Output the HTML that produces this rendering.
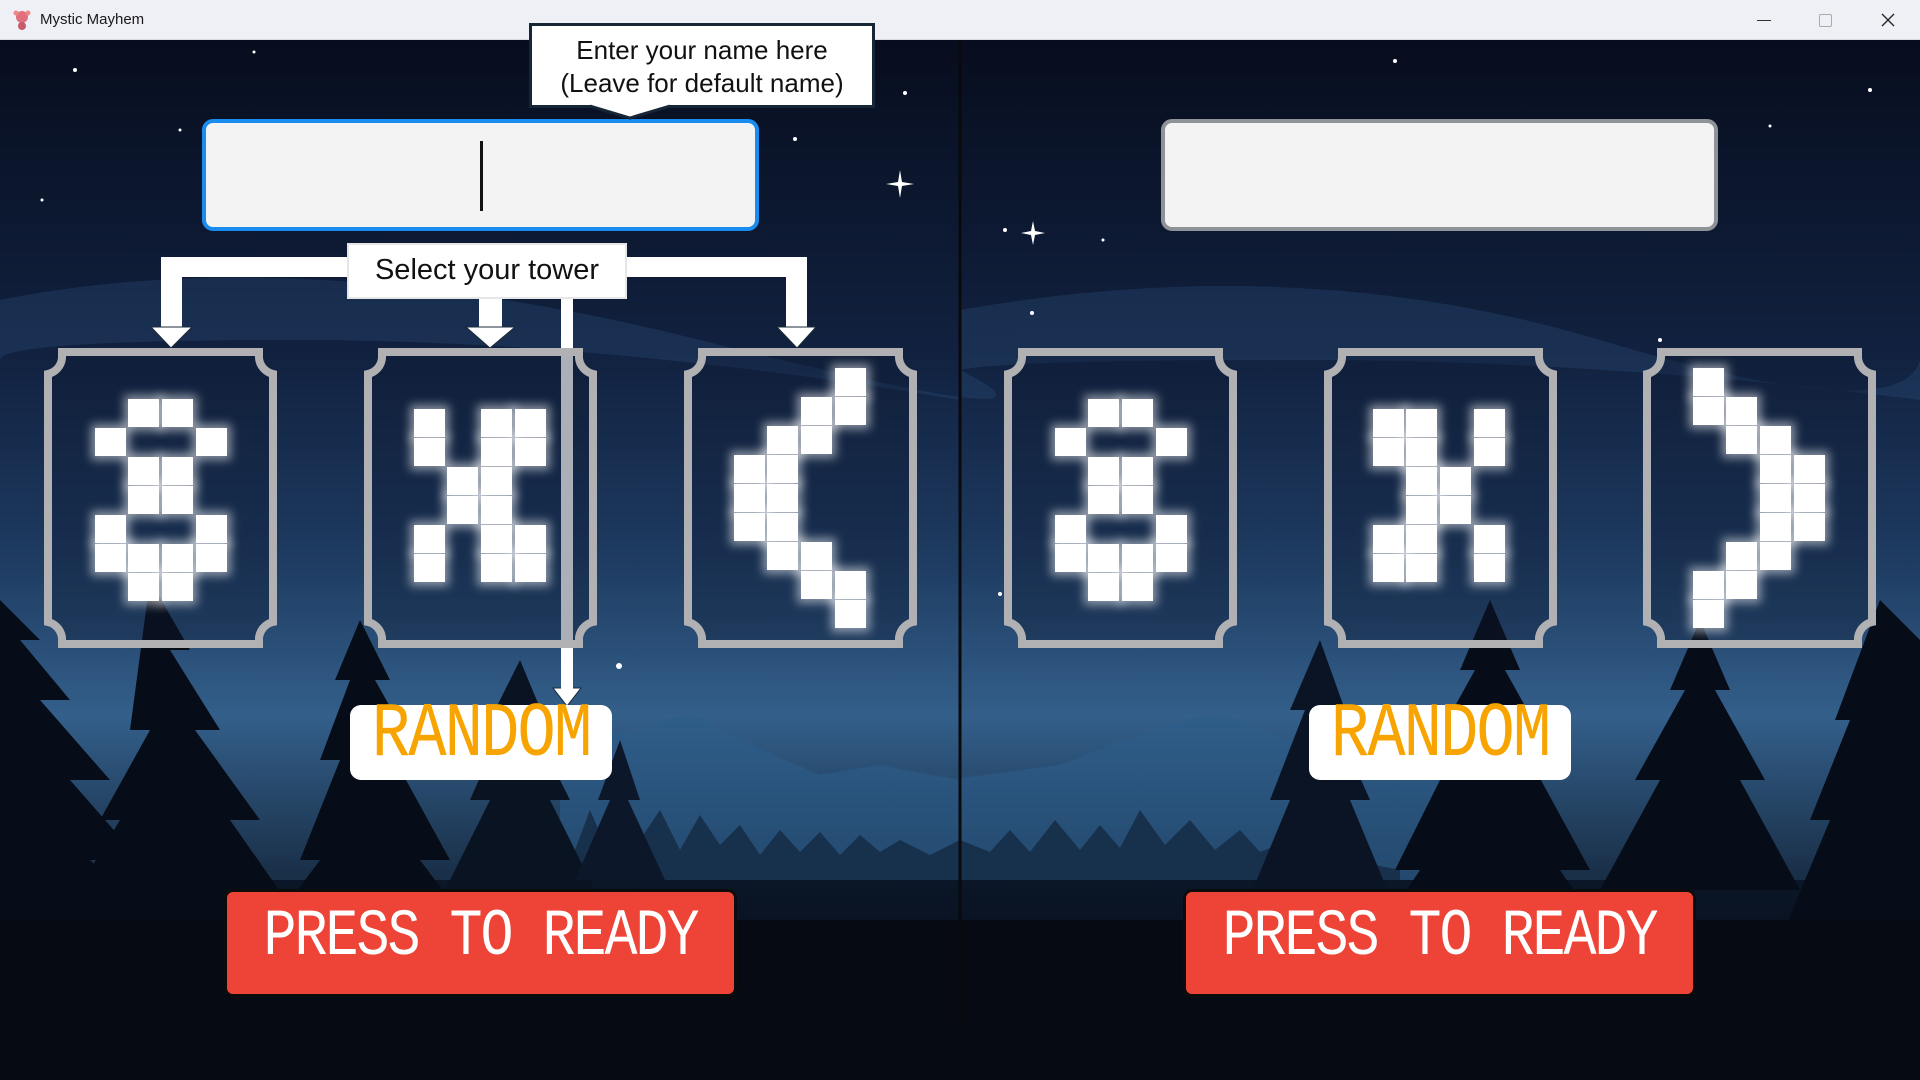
<!DOCTYPE html>
<html><head><meta charset="utf-8"><style>
*{margin:0;padding:0;box-sizing:border-box}
body{width:1920px;height:1080px;overflow:hidden;background:#05080f;position:relative;font-family:"Liberation Sans",sans-serif}
.abs{position:absolute}
#title{left:0;top:0;width:1920px;height:40px;background:#eff0f5;border-bottom:1px solid #d8d8de}
#title .t{left:40px;top:11px;font-size:15px;color:#1a1a1a}
.tip{background:#fff;border:3px solid #172636;color:#111;text-align:center}
.inp{background:#f3f3f4;border-radius:11px}
.cell{position:absolute;width:31px;height:28px;background:#fff;box-shadow:0 0 9px 4px rgba(255,255,255,.5)}
.rand{background:#fff;border-radius:11px;color:#f7a400;font-family:"Liberation Mono",monospace;font-size:64px;text-align:center;line-height:62px;letter-spacing:-2px}
.rand span,.ready span{display:inline-block;transform:scaleY(1.2)}
.ready{background:#ee4337;border:3px solid #0c0c0c;border-radius:9px;color:#fff;font-family:"Liberation Mono",monospace;font-size:55px;text-align:center;line-height:90px;letter-spacing:-2px}
.bar{background:#fff}
</style></head><body>
<svg class="abs" style="left:0;top:40px" width="1920" height="1040" viewBox="0 0 1920 1040">
<defs>
<linearGradient id="sky" x1="0" y1="0" x2="0" y2="1">
<stop offset="0" stop-color="#070d1e"/><stop offset=".3" stop-color="#11213f"/><stop offset=".5" stop-color="#1e3b61"/><stop offset=".65" stop-color="#335f8a"/><stop offset=".8" stop-color="#1a3049"/><stop offset="1" stop-color="#060a12"/>
</linearGradient>
<linearGradient id="mt" x1="0" y1="0" x2="0" y2="1"><stop offset="0" stop-color="#2f5e8a"/><stop offset="1" stop-color="#16304d"/></linearGradient>
<linearGradient id="fg" x1="0" y1="0" x2="0" y2="1"><stop offset="0" stop-color="#0b1628"/><stop offset="1" stop-color="#04070d"/></linearGradient>
</defs>
<rect width="1920" height="1040" fill="url(#sky)"/>
<g fill="#2a4d78" opacity=".35">
<path d="M0 260 Q300 200 700 300 T960 330 L960 360 Q600 300 300 300 T0 320Z"/>
<path d="M960 270 Q1300 210 1600 300 T1920 320 L1920 360 Q1600 320 1300 320 T960 330Z"/>
</g>
<path d="M560 700 L640 690 L690 672 L740 700 L820 735 L880 725 L960 740 L960 1040 L560 1040Z" fill="url(#mt)"/>
<path d="M960 738 L1060 725 L1150 690 L1217 672 L1290 700 L1400 720 L1500 735 L1500 1040 L960 1040Z" fill="url(#mt)"/>
<path d="M540 820 L560 780 L575 810 L590 770 L605 805 L620 760 L640 800 L660 770 L680 810 L700 775 L720 805 L740 785 L760 815 L780 790 L800 812 L820 792 L840 815 L860 795 L880 812 L900 800 L930 815 L960 800 L990 812 L1010 790 L1030 812 L1055 780 L1080 810 L1100 785 L1120 808 L1140 770 L1165 805 L1190 780 L1215 810 L1240 790 L1260 812 L1290 800 L1320 815 L1350 820 L1400 830 L1400 1040 L540 1040Z" fill="#17304c"/>
<rect y="840" width="1920" height="200" fill="url(#fg)"/>
<g fill="#070d18">
<path d="M0 560 L40 600 L20 600 L70 660 L40 660 L110 740 L70 740 L140 820 L90 820 L170 900 L0 900Z"/>
<path d="M150 540 L190 610 L170 610 L220 690 L195 690 L260 780 L230 780 L300 880 L60 880 L120 780 L100 780 L150 690 L130 690Z" />
<path d="M360 580 L390 640 L375 640 L420 720 L395 720 L450 820 L420 820 L480 900 L260 900 L320 820 L300 820 L340 720 L320 720 L350 640 L335 640Z"/>
<path d="M520 620 L545 680 L530 680 L570 760 L550 760 L600 860 L440 860 L490 760 L470 760 L505 680 L490 680Z" fill="#0a1322"/>
<path d="M620 700 L640 760 L628 760 L665 840 L575 840 L610 760 L598 760Z" fill="#0c172a"/>
<path d="M1320 600 L1345 670 L1330 670 L1370 760 L1350 760 L1400 880 L1240 880 L1290 760 L1270 760 L1305 670 L1290 670Z" fill="#0a1424"/>
<path d="M1490 560 L1520 630 L1505 630 L1555 720 L1530 720 L1590 830 L1560 830 L1620 920 L1360 920 L1420 830 L1395 830 L1450 720 L1425 720 L1475 630 L1460 630Z"/>
<path d="M1700 580 L1730 650 L1715 650 L1765 740 L1740 740 L1800 850 L1600 850 L1660 740 L1635 740 L1685 650 L1670 650Z"/>
<path d="M1880 560 L1920 600 L1920 900 L1780 900 L1830 780 L1810 780 L1850 680 L1835 680Z"/>
<rect y="880" width="1920" height="160" fill="#060a12"/>
</g>
<g fill="#fff">
<circle cx="75" cy="30" r="2"/><circle cx="254" cy="12" r="1.5"/><circle cx="410" cy="130" r="1.5"/><circle cx="42" cy="160" r="1.5"/><circle cx="795" cy="99" r="2"/><circle cx="905" cy="53" r="2"/><circle cx="1005" cy="190" r="2"/><circle cx="1103" cy="200" r="1.5"/><circle cx="1225" cy="110" r="1.5"/><circle cx="1395" cy="21" r="2"/><circle cx="1617" cy="160" r="1.5"/><circle cx="1870" cy="50" r="2"/><circle cx="1660" cy="300" r="2"/><circle cx="1032" cy="273" r="2"/><circle cx="619" cy="626" r="3"/><circle cx="1000" cy="554" r="2"/><circle cx="180" cy="90" r="1.5"/><circle cx="1770" cy="86" r="1.5"/>
<path d="M900 130 l2 12 l12 2 l-12 2 l-2 12 l-2 -12 l-12 -2 l12 -2z"/>
<path d="M1033 181 l2 10 l10 2 l-10 2 l-2 10 l-2 -10 l-10 -2 l10 -2z"/>
</g>
<line x1="960" y1="0" x2="960" y2="985" stroke="#0a0a0c" stroke-width="3"/>
</svg>

<div id="title" class="abs"><svg class="abs" style="left:12px;top:9px" width="20" height="22" viewBox="0 0 20 22"><circle cx="10" cy="8" r="6" fill="#e0707e"/><circle cx="10" cy="17" r="4" fill="#c95a6a"/><circle cx="4" cy="4" r="2.5" fill="#e88"/><circle cx="16" cy="4" r="2.5" fill="#e88"/></svg><div class="abs t">Mystic Mayhem</div>
<div class="abs" style="left:1757px;top:20px;width:14px;height:1px;background:#333"></div>
<div class="abs" style="left:1819px;top:14px;width:13px;height:13px;border:1px solid #aaa;border-radius:2px"></div>
<svg class="abs" style="left:1881px;top:13px" width="14" height="14"><path d="M1 1L13 13M13 1L1 13" stroke="#222" stroke-width="1.3"/></svg>
</div>

<div class="abs inp" style="left:202px;top:119px;width:557px;height:112px;border:4px solid #1a8cf0"></div>
<div class="abs" style="left:480px;top:141px;width:3px;height:70px;background:#111"></div>
<div class="abs inp" style="left:1161px;top:119px;width:557px;height:112px;border:4px solid #8f9296"></div>

<div class="abs tip" style="left:529px;top:23px;width:346px;height:85px;font-size:26px;line-height:33px;padding-top:8px">Enter your name here<br>(Leave for default name)</div>
<svg class="abs" style="left:590px;top:104px" width="80" height="16"><path d="M0 1 L80 1 L40 14Z" fill="#fff"/><path d="M0 2 L40 14 L80 2" stroke="#172636" stroke-width="3" fill="none"/></svg>

<div class="abs bar" style="left:161px;top:257px;width:646px;height:20px"></div>
<div class="abs bar" style="left:161px;top:257px;width:21px;height:72px"></div>
<div class="abs bar" style="left:479px;top:290px;width:23px;height:39px"></div>
<div class="abs bar" style="left:786px;top:257px;width:21px;height:72px"></div>
<svg class="abs" style="left:0;top:0" width="960" height="720">
<g fill="#fff" stroke="#1a2a3a" stroke-width="1">
<path d="M151 327 L192 327 L171 348Z"/><path d="M466 327 L515 327 L490 348Z"/><path d="M777 327 L816 327 L797 348Z"/>
<path d="M553 688 L581 688 L567 706Z"/>
</g></svg>
<div class="abs bar" style="left:561px;top:296px;width:12px;height:394px"></div>
<div class="abs tip" style="left:347px;top:243px;width:280px;height:56px;border:2px solid #e6e6e6;font-size:29px;line-height:50px">Select your tower</div>

<svg class="abs" style="left:0;top:0" width="1920" height="700">
<defs><path id="card" d="M18 4 H215 V10 A18 18 0 0 0 229 26 V274 A18 18 0 0 0 215 290 V296 H18 V290 A18 18 0 0 0 4 274 V26 A18 18 0 0 0 18 10 Z" fill="rgba(14,26,48,.35)" stroke="#b1b1b3" stroke-width="8"/></defs>
<use href="#card" x="44" y="348"/><use href="#card" x="364" y="348"/><use href="#card" x="684" y="348"/>
<use href="#card" x="1004" y="348"/><use href="#card" x="1324" y="348"/><use href="#card" x="1643" y="348"/>
</svg>

<div class="abs rand" style="left:350px;top:705px;width:262px;height:75px"><span>RANDOM</span></div>
<div class="abs rand" style="left:1309px;top:705px;width:262px;height:75px"><span>RANDOM</span></div>
<div class="abs ready" style="left:224px;top:889px;width:513px;height:108px"><span>PRESS TO READY</span></div>
<div class="abs ready" style="left:1183px;top:889px;width:513px;height:108px"><span>PRESS TO READY</span></div>

<div class="abs" style="left:95px;top:399px">
<div class="cell" style="left:33px;top:0"></div><div class="cell" style="left:67px;top:0"></div>
<div class="cell" style="left:0;top:29px"></div><div class="cell" style="left:101px;top:29px"></div>
<div class="cell" style="left:33px;top:58px"></div><div class="cell" style="left:67px;top:58px"></div>
<div class="cell" style="left:33px;top:87px"></div><div class="cell" style="left:67px;top:87px"></div>
<div class="cell" style="left:0;top:116px"></div><div class="cell" style="left:101px;top:116px"></div>
<div class="cell" style="left:0;top:145px"></div><div class="cell" style="left:33px;top:145px"></div><div class="cell" style="left:67px;top:145px"></div><div class="cell" style="left:101px;top:145px"></div>
<div class="cell" style="left:33px;top:174px"></div><div class="cell" style="left:67px;top:174px"></div>
</div>
<div class="abs" style="left:1055px;top:399px">
<div class="cell" style="left:33px;top:0"></div><div class="cell" style="left:67px;top:0"></div>
<div class="cell" style="left:0;top:29px"></div><div class="cell" style="left:101px;top:29px"></div>
<div class="cell" style="left:33px;top:58px"></div><div class="cell" style="left:67px;top:58px"></div>
<div class="cell" style="left:33px;top:87px"></div><div class="cell" style="left:67px;top:87px"></div>
<div class="cell" style="left:0;top:116px"></div><div class="cell" style="left:101px;top:116px"></div>
<div class="cell" style="left:0;top:145px"></div><div class="cell" style="left:33px;top:145px"></div><div class="cell" style="left:67px;top:145px"></div><div class="cell" style="left:101px;top:145px"></div>
<div class="cell" style="left:33px;top:174px"></div><div class="cell" style="left:67px;top:174px"></div>
</div>
<div class="abs" style="left:414px;top:409px">
<div class="cell" style="left:0;top:0"></div><div class="cell" style="left:67px;top:0"></div><div class="cell" style="left:101px;top:0"></div>
<div class="cell" style="left:0;top:29px"></div><div class="cell" style="left:67px;top:29px"></div><div class="cell" style="left:101px;top:29px"></div>
<div class="cell" style="left:33px;top:58px"></div><div class="cell" style="left:67px;top:58px"></div>
<div class="cell" style="left:33px;top:87px"></div><div class="cell" style="left:67px;top:87px"></div>
<div class="cell" style="left:0;top:116px"></div><div class="cell" style="left:67px;top:116px"></div><div class="cell" style="left:101px;top:116px"></div>
<div class="cell" style="left:0;top:145px"></div><div class="cell" style="left:67px;top:145px"></div><div class="cell" style="left:101px;top:145px"></div>
</div>
<div class="abs" style="left:1373px;top:409px">
<div class="cell" style="left:0;top:0"></div><div class="cell" style="left:33px;top:0"></div><div class="cell" style="left:101px;top:0"></div>
<div class="cell" style="left:0;top:29px"></div><div class="cell" style="left:33px;top:29px"></div><div class="cell" style="left:101px;top:29px"></div>
<div class="cell" style="left:33px;top:58px"></div><div class="cell" style="left:67px;top:58px"></div>
<div class="cell" style="left:33px;top:87px"></div><div class="cell" style="left:67px;top:87px"></div>
<div class="cell" style="left:0;top:116px"></div><div class="cell" style="left:33px;top:116px"></div><div class="cell" style="left:101px;top:116px"></div>
<div class="cell" style="left:0;top:145px"></div><div class="cell" style="left:33px;top:145px"></div><div class="cell" style="left:101px;top:145px"></div>
</div>
<div class="abs" style="left:734px;top:368px">
<div class="cell" style="left:101px;top:0"></div>
<div class="cell" style="left:67px;top:29px"></div><div class="cell" style="left:101px;top:29px"></div>
<div class="cell" style="left:33px;top:58px"></div><div class="cell" style="left:67px;top:58px"></div>
<div class="cell" style="left:0;top:87px"></div><div class="cell" style="left:33px;top:87px"></div>
<div class="cell" style="left:0;top:116px"></div><div class="cell" style="left:33px;top:116px"></div>
<div class="cell" style="left:0;top:145px"></div><div class="cell" style="left:33px;top:145px"></div>
<div class="cell" style="left:33px;top:174px"></div><div class="cell" style="left:67px;top:174px"></div>
<div class="cell" style="left:67px;top:203px"></div><div class="cell" style="left:101px;top:203px"></div>
<div class="cell" style="left:101px;top:232px"></div>
</div>
<div class="abs" style="left:1693px;top:368px">
<div class="cell" style="left:0;top:0"></div>
<div class="cell" style="left:0;top:29px"></div><div class="cell" style="left:33px;top:29px"></div>
<div class="cell" style="left:33px;top:58px"></div><div class="cell" style="left:67px;top:58px"></div>
<div class="cell" style="left:67px;top:87px"></div><div class="cell" style="left:101px;top:87px"></div>
<div class="cell" style="left:67px;top:116px"></div><div class="cell" style="left:101px;top:116px"></div>
<div class="cell" style="left:67px;top:145px"></div><div class="cell" style="left:101px;top:145px"></div>
<div class="cell" style="left:33px;top:174px"></div><div class="cell" style="left:67px;top:174px"></div>
<div class="cell" style="left:0;top:203px"></div><div class="cell" style="left:33px;top:203px"></div>
<div class="cell" style="left:0;top:232px"></div>
</div>
</body></html>
